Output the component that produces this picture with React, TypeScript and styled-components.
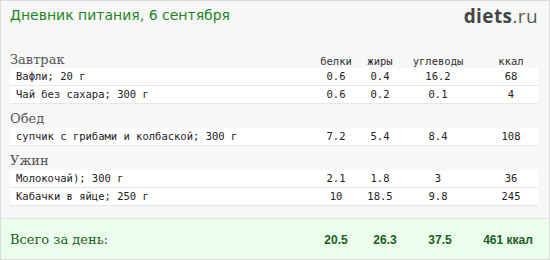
import React from 'react';
import styled, { createGlobalStyle } from 'styled-components';

const GlobalStyle = createGlobalStyle`
  html, body {
    margin: 0;
    padding: 0;
    background: #ffffff;
  }
`;

type Food = {
  name: string;
  protein: string;
  fat: string;
  carbs: string;
  kcal: string;
};

type Meal = {
  title: string;
  foods: Food[];
};

const meals: Meal[] = [
  {
    title: 'Завтрак',
    foods: [
      { name: 'Вафли; 20 г', protein: '0.6', fat: '0.4', carbs: '16.2', kcal: '68' },
      { name: 'Чай без сахара; 300 г', protein: '0.6', fat: '0.2', carbs: '0.1', kcal: '4' },
    ],
  },
  {
    title: 'Обед',
    foods: [
      { name: 'супчик с грибами и колбаской; 300 г', protein: '7.2', fat: '5.4', carbs: '8.4', kcal: '108' },
    ],
  },
  {
    title: 'Ужин',
    foods: [
      { name: 'Молокочай); 300 г', protein: '2.1', fat: '1.8', carbs: '3', kcal: '36' },
      { name: 'Кабачки в яйце; 250 г', protein: '10', fat: '18.5', carbs: '9.8', kcal: '245' },
    ],
  },
];

const Card = styled.div`
  box-sizing: border-box;
  width: 550px;
  height: 260px;
  border: 1px solid #dcdcdc;
  background: #f7f7f7;
  display: flex;
  flex-direction: column;
`;

const Header = styled.div`
  display: flex;
  justify-content: space-between;
  align-items: flex-start;
  height: 45px;
  padding: 4px 11px 0 9px;
`;

const Title = styled.h1`
  margin: 0;
  font-family: 'DejaVu Sans', Verdana, sans-serif;
  font-weight: normal;
  font-size: 14px;
  line-height: 20px;
  color: #1f851f;
`;

const Logo = styled.div`
  font-family: 'Open Sans', 'DejaVu Sans', sans-serif;
  font-size: 19px;
  line-height: 22px;
  color: #444444;
  letter-spacing: 0.4px;

  b {
    font-weight: 700;
  }
  span {
    color: #5a5a5a;
  }
`;

const Body = styled.div`
  display: flex;
  flex-direction: column;
  gap: 6px;
  padding: 0 11px 0 9px;
`;

const Section = styled.div`
  display: flex;
  flex-direction: column;
`;

const Grid = styled.div`
  display: grid;
  grid-template-columns: 1fr 50px 38px 78px 61px;
  align-items: center;
`;

const HeadRow = styled(Grid)`
  height: 18px;
`;

const MealTitle = styled.div`
  font-family: 'DejaVu Serif', Georgia, serif;
  font-size: 13px;
  line-height: 18px;
  color: #555555;
`;

const ColLabel = styled.div<{ $last?: boolean }>`
  font-family: 'DejaVu Sans Mono', 'Liberation Mono', monospace;
  font-size: 10.5px;
  line-height: 18px;
  color: #333333;
  text-align: center;
  padding-left: ${({ $last }) => ($last ? '7px' : '0')};
  padding-top: 2px;
`;

const FoodRow = styled(Grid)`
  height: 17px;
  background: #ffffff;
  border-bottom: 1px solid #e6e6e6;
  font-family: 'DejaVu Sans Mono', 'Liberation Mono', monospace;
  font-size: 10.5px;
  line-height: 17px;
  color: #222222;
`;

const FoodName = styled.div`
  padding-left: 6px;
  white-space: nowrap;
`;

const Cell = styled.div<{ $last?: boolean }>`
  text-align: center;
  padding-left: ${({ $last }) => ($last ? '7px' : '0')};
`;

const Footer = styled.div`
  margin-top: auto;
  height: 40px;
  border-top: 1px solid #dfe8df;
  background: #ebfdeb;
  padding: 0 11px 0 9px;
  display: grid;
  grid-template-columns: 1fr 64px 34px 76px 60px;
  align-items: center;
`;

const TotalLabel = styled.div`
  font-family: 'DejaVu Serif', Georgia, serif;
  font-size: 13px;
  color: #1b5e1b;
  padding-top: 1px;
`;

const TotalCell = styled.div`
  font-family: 'Liberation Sans', Arial, sans-serif;
  font-weight: bold;
  font-size: 12px;
  color: #1b5e1b;
  text-align: center;
  white-space: nowrap;
  padding-top: 2px;
`;

export default function App() {
  return (
    <>
      <GlobalStyle />
      <Card>
        <Header>
          <Title>Дневник питания, 6 сентября</Title>
          <Logo>
            <b>diets</b>
            <span>.ru</span>
          </Logo>
        </Header>
        <Body>
          {meals.map((meal, i) => (
            <Section key={meal.title}>
              <HeadRow>
                <MealTitle>{meal.title}</MealTitle>
                {i === 0 && (
                  <>
                    <ColLabel>белки</ColLabel>
                    <ColLabel>жиры</ColLabel>
                    <ColLabel>углеводы</ColLabel>
                    <ColLabel $last>ккал</ColLabel>
                  </>
                )}
              </HeadRow>
              {meal.foods.map((f) => (
                <FoodRow key={f.name}>
                  <FoodName>{f.name}</FoodName>
                  <Cell>{f.protein}</Cell>
                  <Cell>{f.fat}</Cell>
                  <Cell>{f.carbs}</Cell>
                  <Cell $last>{f.kcal}</Cell>
                </FoodRow>
              ))}
            </Section>
          ))}
        </Body>
        <Footer>
          <TotalLabel>Всего за день:</TotalLabel>
          <TotalCell>20.5</TotalCell>
          <TotalCell>26.3</TotalCell>
          <TotalCell>37.5</TotalCell>
          <TotalCell>461 ккал</TotalCell>
        </Footer>
      </Card>
    </>
  );
}
